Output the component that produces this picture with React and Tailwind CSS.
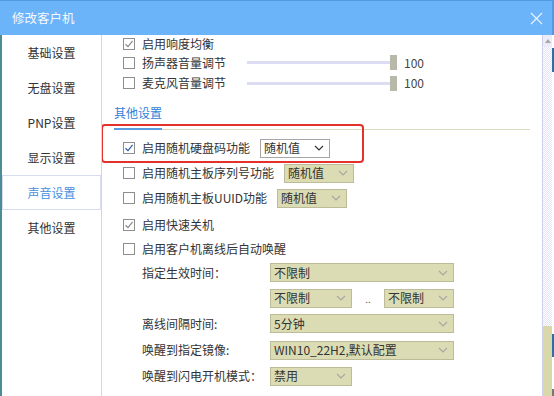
import React from 'react';

const font = { fontFamily: '"Microsoft YaHei", "Noto Sans CJK SC", "Noto Sans", sans-serif' };

const menu = ['基础设置', '无盘设置', 'PNP设置', '显示设置', '声音设置', '其他设置'];

const Check = ({ checked, active }) => (
  <span className="w-[12px] h-[12px] border border-[#8e8e8e] bg-white flex items-center justify-center shrink-0">
    {checked && (
      <svg width="10" height="10" viewBox="0 0 10 10">
        <polyline
          points="1.5,5.2 4,7.6 8.6,1.8"
          fill="none"
          stroke={active ? '#2d5ea8' : '#8a8a8a'}
          strokeWidth="1.2"
        />
      </svg>
    )}
  </span>
);

const Chevron = ({ dark }) => (
  <svg width="10" height="6" viewBox="0 0 10 6">
    <polyline points="1,1 5,5 9,1" fill="none" stroke={dark ? '#333' : '#a8a8a0'} strokeWidth="1.2" />
  </svg>
);

const Select = ({ value, w, white }) => (
  <div
    className={
      'h-[19px] flex items-center justify-between pl-[3px] pr-[5px] border text-[12px] text-[#333] ' +
      (white ? 'bg-white border-[#a6a6a6]' : 'bg-[#dcdcb4] border-[#bcbc98]')
    }
    style={{ width: w }}
  >
    <span className="leading-none">{value}</span>
    <Chevron dark={white} />
  </div>
);

const CheckRow = ({ label, checked, active, h, children }) => (
  <div className={'flex items-center ' + h}>
    <Check checked={checked} active={active} />
    <span className="ml-[7px] mr-[10px] text-[12px] text-[#333] whitespace-nowrap">{label}</span>
    {children}
  </div>
);

// label ends at x 226, track starts at 247
const Slider = () => (
  <div className="ml-[11px] flex items-center">
    <div className="relative w-[150px] h-[15px] flex items-center">
      <div className="w-full h-[3px] bg-[#dcdcf2]" />
      <div className="absolute right-0 top-0 w-[7px] h-[15px] bg-[#b9b9ab]" />
    </div>
    <span className="ml-[7px] text-[12px] text-[#444]">100</span>
  </div>
);

const FieldRow = ({ label, h, children }) => (
  <div className={'flex items-center pl-[19px] ' + h}>
    <span className="w-[128px] text-[12px] text-[#333] whitespace-nowrap">{label}</span>
    {children}
  </div>
);

export default function App() {
  return (
    <div className="w-[554px] h-[396px] overflow-hidden flex bg-white" style={font}>
      <div className="w-[552px] h-full flex flex-col">
        <div className="h-[35px] bg-[#6cb4f9] border-t border-[#4e9be0] flex items-center justify-between pl-[12px] pr-[9px] shrink-0">
          <span className="text-[#f4f9ff] text-[12.5px]">修改客户机</span>
          <svg width="13" height="13" viewBox="0 0 13 13">
            <path d="M1 1 L12 12 M12 1 L1 12" stroke="#e8f3ff" strokeWidth="1.2" />
          </svg>
        </div>
        <div className="flex-1 flex border-l-2 border-[#4b8c96] min-h-0">
          <div className="w-[100px] border-r border-[#d3d6ea] shrink-0">
            {menu.map((m) => (
              <div
                key={m}
                className={
                  'h-[35px] flex items-center justify-center text-[12px] ' +
                  (m === '声音设置'
                    ? 'border border-[#d8dcef] text-[#4a8ee0] bg-white'
                    : 'text-[#333]')
                }
              >
                {m}
              </div>
            ))}
          </div>

          <div className="flex-1 relative pl-[21px] overflow-hidden">
            <CheckRow label="启用响度均衡" checked h="h-[17px]" />
            <CheckRow label="扬声器音量调节" h="h-[21px]">
              <Slider />
            </CheckRow>
            <CheckRow label="麦克风音量调节" h="h-[20px]">
              <Slider />
            </CheckRow>

            <div className="-ml-[9px] mr-[12px] pt-[10px]">
              <div className="h-[20px] flex items-center text-[12px] text-[#2f7fd8]">其他设置</div>
              <div className="mt-[5px] h-[2px] relative">
                <div className="absolute left-0 right-0 top-[1px] h-[1px] bg-[#d9d9bd]" />
                <div className="absolute left-0 top-0 w-[48px] h-[2px] bg-[#5b9be0]" />
              </div>
            </div>

            <div className="h-[5px]" />
            <CheckRow label="启用随机硬盘码功能" checked active h="h-[26px]">
              <Select value="随机值" w={70} white />
            </CheckRow>
            <CheckRow label="启用随机主板序列号功能" h="h-[24px]">
              <Select value="随机值" w={70} />
            </CheckRow>
            <CheckRow label="启用随机主板UUID功能" h="h-[26px]">
              <Select value="随机值" w={70} />
            </CheckRow>
            <CheckRow label="启用快速关机" checked h="h-[27px]" />
            <CheckRow label="启用客户机离线后自动唤醒" h="h-[21px]" />

            <FieldRow label="指定生效时间：" h="h-[27px]">
              <Select value="不限制" w={184} />
            </FieldRow>
            <FieldRow label="" h="h-[24px]">
              <Select value="不限制" w={82} />
              <span className="w-[32px] text-center text-[10px] text-[#555]">..</span>
              <Select value="不限制" w={70} />
            </FieldRow>
            <FieldRow label="离线间隔时间:" h="h-[27px]">
              <Select value="5分钟" w={184} />
            </FieldRow>
            <FieldRow label="唤醒到指定镜像:" h="h-[26px]">
              <Select value="WIN10_22H2,默认配置" w={184} />
            </FieldRow>
            <FieldRow label="唤醒到闪电开机模式：" h="h-[26px]">
              <Select value="禁用" w={82} />
            </FieldRow>
            <CheckRow label="启用虚拟内存设置" h="h-[26px]" />

            <div className="absolute left-[-1px] top-[89px] w-[263px] h-[39px] border-[2.5px] border-[#e4312b] rounded-[4px]" />
          </div>

          <div className="w-[10px] border-l border-[#cfcff0] flex flex-col shrink-0 bg-[repeating-conic-gradient(#e4e4f6_0%_25%,#ffffff_0%_50%)] bg-[length:2px_2px]">
            <div className="h-[12px] bg-[#ececf8] flex items-center justify-center">
              <svg width="6" height="4" viewBox="0 0 6 4">
                <polygon points="0,4 3,0 6,4" fill="#a8a8a0" />
              </svg>
            </div>
            <div className="flex-1" />
            <div className="h-[70px] bg-[#d8d8aa]" />
          </div>
        </div>
      </div>
      <div className="w-[2px] h-full flex flex-col bg-white">
        <div className="h-[35px] bg-[#4e9be0]" />
        <div className="h-[13px]" />
        <div className="h-[24px] bg-[#2f6ea8]" />
        <div className="flex-1" />
        <div className="h-[23px] bg-[#2f6ea8]" />
        <div className="h-[32px]" />
        <div className="h-[7px] bg-[#777]" />
      </div>
    </div>
  );
}
